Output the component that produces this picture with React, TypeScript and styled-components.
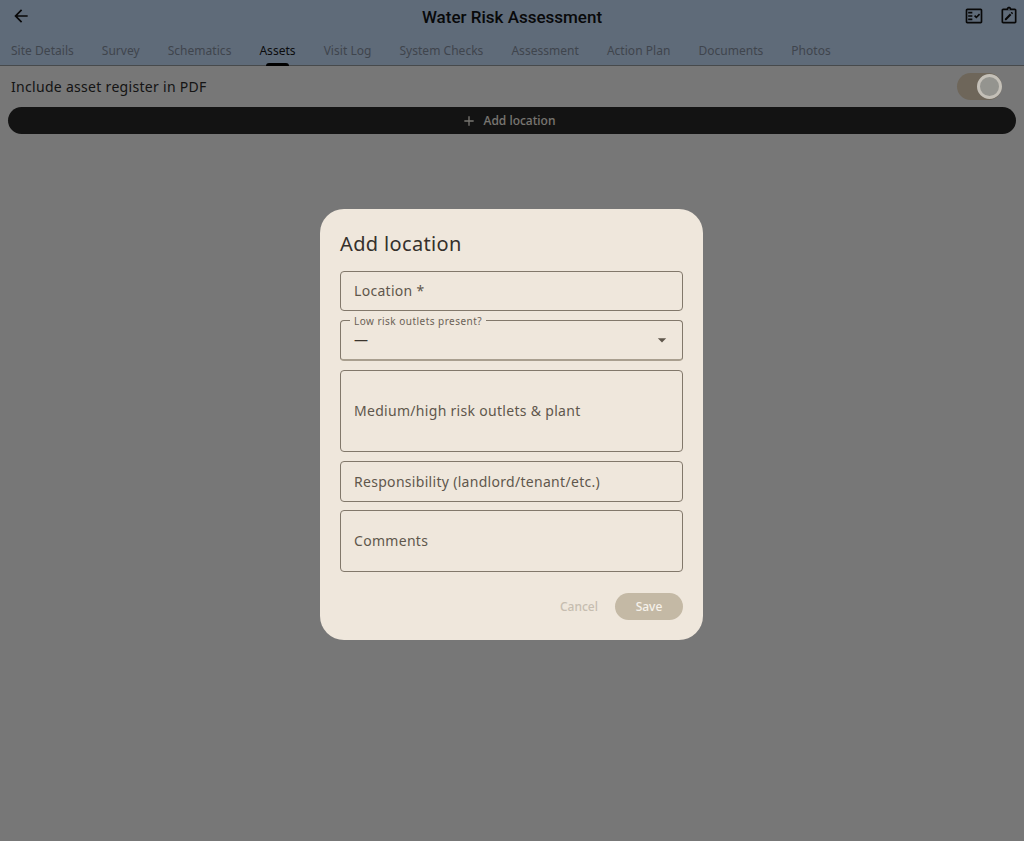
import React from "react";
import styled, { createGlobalStyle } from "styled-components";
import { MdAdd, MdArrowBack, MdArrowDropDown, MdOutlineFactCheck } from "react-icons/md";

const GlobalStyle = createGlobalStyle`
  html, body {
    margin: 0;
    height: 100%;
  }
  body {
    background: #eeeeee;
    font-family: "Noto Sans", sans-serif;
  }
`;

const Page = styled.div`
  min-height: 841px;
`;

const Header = styled.header`
  height: 66px;
  background: #bed6f3;
  border-bottom: 1px solid #8f9499;
  box-sizing: border-box;
  display: flex;
  flex-direction: column;
`;

const TitleRow = styled.div`
  height: 34px;
  display: grid;
  grid-template-columns: 1fr auto 1fr;
  align-items: center;
  padding: 0 5px;
  color: #111;
`;

const BackIcon = styled(MdArrowBack)`
  margin: 0 0 2px 6px;
`;

const Title = styled.h1`
  margin: 0;
  font-family: Roboto, sans-serif;
  font-size: 17px;
  font-weight: 500;
  color: #111214;
`;

const IconGroup = styled.div`
  justify-self: end;
  display: flex;
  align-items: center;
  gap: 15px;
  margin-bottom: 2px;
`;

const Tabs = styled.nav`
  flex: 1;
  display: flex;
  gap: 28px;
  padding-left: 11px;
`;

const Tab = styled.div<{ $active?: boolean }>`
  position: relative;
  padding-top: 8px;
  font-size: 12px;
  line-height: 18px;
  letter-spacing: 0.03px;
  color: ${({ $active }) => ($active ? "#16181b" : "#7e8a9a")};

  ${({ $active }) =>
    $active &&
    `
    &::after {
      content: "";
      position: absolute;
      left: 50%;
      bottom: -1px;
      width: 23px;
      height: 3px;
      margin-left: -11.5px;
      border-radius: 3px 3px 0 0;
      background: #000;
    }
  `}
`;

const Content = styled.main`
  padding: 7px 8px 0;
`;

const SwitchRow = styled.div`
  display: flex;
  align-items: center;
  justify-content: space-between;
  height: 27px;
  padding: 0 14px 0 3px;
  font-size: 14px;
  letter-spacing: 0.3px;
  color: #2b2b2b;
`;

const Switch = styled.div`
  width: 45px;
  height: 27px;
  box-sizing: border-box;
  padding: 1px 0;
  border-radius: 14px;
  background: #dccdb4;
  display: flex;
  justify-content: flex-end;
`;

// the thumb stays bright in the reference, so it sits above the scrim
const Thumb = styled.div`
  position: relative;
  z-index: 1;
  width: 25px;
  height: 25px;
  box-sizing: border-box;
  border: 3px solid #c4c0b8;
  border-radius: 50%;
  background: #94948f;
`;

const AddButton = styled.div`
  height: 27px;
  margin-top: 7px;
  padding-right: 8px;
  border-radius: 14px;
  background: #262626;
  color: #f0ebe2;
  display: flex;
  align-items: center;
  justify-content: center;
  gap: 7px;
  font-size: 12px;
  font-weight: 500;
`;

const Overlay = styled.div`
  position: fixed;
  inset: 0;
  padding: 8px 1px 0 0;
  box-sizing: border-box;
  background: rgba(0, 0, 0, 0.5);
  display: flex;
  align-items: center;
  justify-content: center;
`;

const Dialog = styled.div`
  width: 383px;
  height: 431px;
  box-sizing: border-box;
  padding: 20px;
  border-radius: 24px;
  background: #efe7dc;
  display: flex;
  flex-direction: column;
`;

const DialogTitle = styled.h2`
  margin: 0 0 13px;
  padding-top: 1px;
  font-size: 20px;
  font-weight: 400;
  line-height: 28px;
  letter-spacing: 0.35px;
  color: #35302b;
`;

const Fields = styled.div`
  display: flex;
  flex-direction: column;
  gap: 9px;
`;

const Field = styled.div<{ $height: number; $tight?: boolean }>`
  position: relative;
  height: ${({ $height }) => $height}px;
  margin-top: ${({ $tight }) => ($tight ? "-1px" : "0")};
  box-sizing: border-box;
  padding: 0 13px 1px;
  border: 1px solid #82786b;
  border-radius: 4px;
  display: flex;
  align-items: center;
  justify-content: space-between;
  font-size: 14px;
  letter-spacing: 0.3px;
  color: #5f574c;
`;

const SelectField = styled(Field)`
  border-bottom: 2px solid #a99f8f;
`;

const FloatingLabel = styled.span`
  position: absolute;
  top: -6px;
  left: 9px;
  padding: 0 4px;
  background: #efe7dc;
  font-size: 10px;
  line-height: 13px;
  letter-spacing: 0.47px;
  color: #6a6156;
`;

const SelectValue = styled.span`
  color: #3b352e;
`;

const DropIcon = styled(MdArrowDropDown)`
  margin-right: -3px;
`;

const Actions = styled.div`
  margin-top: 21px;
  display: flex;
  align-items: center;
  justify-content: flex-end;
  gap: 17px;
  font-size: 12px;
  font-weight: 500;
`;

const CancelLabel = styled.span`
  color: #c6bdb0;
`;

const SaveButton = styled.div`
  width: 68px;
  height: 27px;
  border-radius: 14px;
  background: #c4b9a5;
  color: #f6f1ea;
  display: flex;
  align-items: center;
  justify-content: center;
`;

const ClipboardEdit = () => (
  <svg width="20" height="20" viewBox="0 0 24 24" fill="currentColor">
    <path d="M19 3h-4.2C14.4 1.8 13.3 1 12 1s-2.4.8-2.8 2H5c-1.1 0-2 .9-2 2v14c0 1.1.9 2 2 2h14c1.1 0 2-.9 2-2V5c0-1.1-.9-2-2-2zm-7 0c.55 0 1 .45 1 1s-.45 1-1 1-1-.45-1-1 .45-1 1-1zm7 16H5V5h14v14z" />
    <path d="M7 15.2V17h1.8l6.1-6.1-1.8-1.8L7 15.2zm9.7-6.1c.2-.2.2-.5 0-.7l-1.1-1.1c-.2-.2-.5-.2-.7 0l-.9.9 1.8 1.8.9-.9z" />
  </svg>
);

const tabs = [
  "Site Details",
  "Survey",
  "Schematics",
  "Assets",
  "Visit Log",
  "System Checks",
  "Assessment",
  "Action Plan",
  "Documents",
  "Photos",
];

export default function App() {
  return (
    <Page>
      <GlobalStyle />
      <Header>
        <TitleRow>
          <BackIcon size={20} />
          <Title>Water Risk Assessment</Title>
          <IconGroup>
            <MdOutlineFactCheck size={20} />
            <ClipboardEdit />
          </IconGroup>
        </TitleRow>
        <Tabs>
          {tabs.map((tab) => (
            <Tab key={tab} $active={tab === "Assets"}>
              {tab}
            </Tab>
          ))}
        </Tabs>
      </Header>
      <Content>
        <SwitchRow>
          Include asset register in PDF
          <Switch>
            <Thumb />
          </Switch>
        </SwitchRow>
        <AddButton>
          <MdAdd size={16} />
          Add location
        </AddButton>
      </Content>
      <Overlay>
        <Dialog>
          <DialogTitle>Add location</DialogTitle>
          <Fields>
            <Field $height={40}>Location *</Field>
            <SelectField $height={41}>
              <FloatingLabel>Low risk outlets present?</FloatingLabel>
              <SelectValue>—</SelectValue>
              <DropIcon size={20} />
            </SelectField>
            <Field $height={82}>Medium/high risk outlets &amp; plant</Field>
            <Field $height={41}>Responsibility (landlord/tenant/etc.)</Field>
            <Field $height={62} $tight>
              Comments
            </Field>
          </Fields>
          <Actions>
            <CancelLabel>Cancel</CancelLabel>
            <SaveButton>Save</SaveButton>
          </Actions>
        </Dialog>
      </Overlay>
    </Page>
  );
}
